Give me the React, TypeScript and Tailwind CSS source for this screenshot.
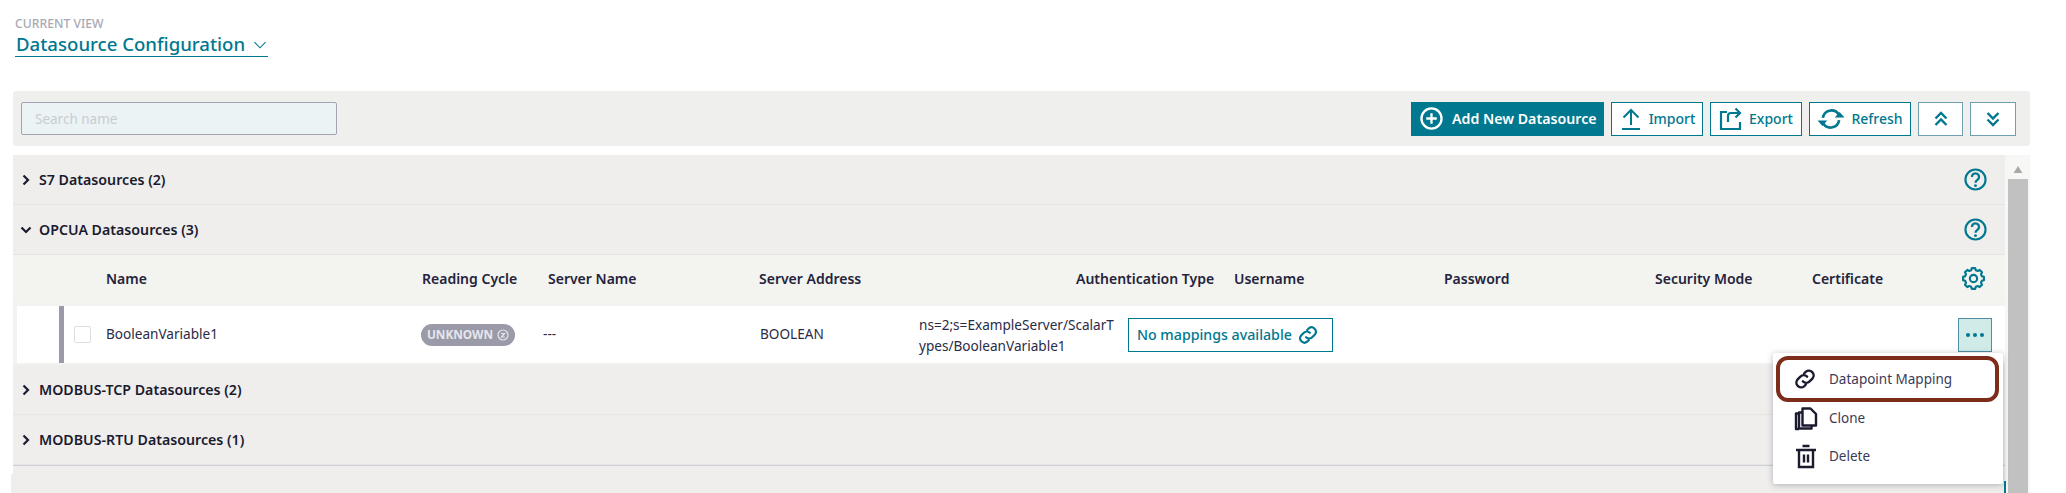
import React from 'react';

const font = { fontFamily: '"Noto Sans", sans-serif' };

const HEADER_COLUMNS = [
  { label: 'Name', width: 'w-[316px]' },
  { label: 'Reading Cycle', width: 'w-[126px]' },
  { label: 'Server Name', width: 'w-[211px]' },
  { label: 'Server Address', width: 'w-[317px]' },
  { label: 'Authentication Type', width: 'w-[158px]' },
  { label: 'Username', width: 'w-[210px]' },
  { label: 'Password', width: 'w-[211px]' },
  { label: 'Security Mode', width: 'w-[157px]' },
  { label: 'Certificate', width: 'w-[100px]' },
];

function gearPath() {
  const teeth = 8;
  const pts: string[] = [];
  for (let i = 0; i < teeth; i++) {
    const a = (i * 2 * Math.PI) / teeth;
    const step = 0.2;
    [
      [9, a - step * 1.35],
      [11, a - step * 0.8],
      [11, a + step * 0.8],
      [9, a + step * 1.35],
    ].forEach(([r, t]) => {
      pts.push(`${(12 + r * Math.sin(t)).toFixed(2)} ${(12 - r * Math.cos(t)).toFixed(2)}`);
    });
  }
  return `M${pts.join('L')}Z`;
}

function LinkIcon({ className }: { className: string }) {
  return (
    <svg viewBox="0 0 24 24" fill="none" stroke="currentColor" strokeWidth="2.6" strokeLinecap="round" className={className}>
      <path d="M11 6l2-2a5.200 5.200 0 0 1 7.300 7.300l-3.300 3.300a5.200 5.200 0 0 1-7.300 0" />
      <path d="M13 18l-2 2a5.200 5.200 0 0 1-7.300-7.300l3.300-3.300a5.200 5.200 0 0 1 7.300 0" />
    </svg>
  );
}

function HelpIcon() {
  return (
    <svg viewBox="0 0 24 24" fill="none" stroke="#00788f" className="h-[23px] w-[23px]">
      <circle cx="12" cy="12" r="10.5" strokeWidth="2.2" />
      <path d="M8.300 9.300a3.700 3.700 0 1 1 5.800 3c-1.300.9-2.100 1.400-2.100 3" strokeWidth="2.4" />
      <circle cx="12" cy="18.400" r="1.500" fill="#00788f" stroke="none" />
    </svg>
  );
}

function GearIcon() {
  return (
    <svg viewBox="0 0 24 24" fill="none" stroke="#00788f" strokeWidth="2.2" strokeLinejoin="round" className="h-[23px] w-[23px]">
      <path d={gearPath()} />
      <circle cx="12" cy="12" r="3.800" />
    </svg>
  );
}

function Chevron({ open }: { open?: boolean }) {
  return (
    <svg viewBox="0 0 12 12" fill="none" stroke="#1b1b30" strokeWidth="2.2" className="h-[12px] w-[12px]">
      <path d={open ? 'M1.500 3.500L6 8l4.500-4.500' : 'M3.500 1.500L8 6l-4.500 4.500'} />
    </svg>
  );
}

function ToolButton({ width, label, icon, muted }: { width: string; label?: string; icon: React.ReactNode; muted?: boolean }) {
  return (
    <button
      className={`${width} ${muted ? 'border-[#6f9fb0]' : 'border-[#00788f]'} flex h-[34px] items-center justify-center gap-[6px] border bg-white text-[14px] font-medium text-[#00788f]`}
    >
      {icon}
      {label}
    </button>
  );
}

function Section({ title, open, help }: { title: string; open?: boolean; help?: boolean }) {
  return (
    <div className="flex h-[50px] items-center border-b border-[#e6e5e2] pr-[18px] pl-[7px]">
      <Chevron open={open} />
      <span className="ml-[7px] flex-1 text-[14.2px] font-semibold text-[#1b1b30]">{title}</span>
      {help && <HelpIcon />}
    </div>
  );
}

export default function App() {
  return (
    <div style={font} className="relative h-[493px] w-[2066px] overflow-hidden bg-white">
      {/* View switcher */}
      <div className="flex h-[91px] flex-col items-start pt-[16px] pl-[15px]">
        <span className="text-[12.2px] leading-[15px] font-medium text-[#a9a9b6]">CURRENT VIEW</span>
        <div className="flex h-[26px] w-[253px] items-center border-b border-[#00788f] pl-[1px] text-[#00788f]">
          <span className="text-[18.6px] font-medium">Datasource Configuration</span>
          <svg viewBox="0 0 16 10" fill="none" stroke="#00788f" strokeWidth="1.4" className="mt-[3px] ml-[8px] h-[8px] w-[14px]">
            <path d="M1 1.500l7 7 7-7" />
          </svg>
        </div>
      </div>

      {/* Toolbar */}
      <div className="ml-[13px] flex h-[55px] w-[2017px] items-center rounded-[3px] bg-[#efefed] pr-[14px] pl-[8px]">
        <input
          placeholder="Search name"
          className="h-[33px] w-[316px] rounded-[2px] border border-[#a3a3b2] bg-[#ecf3f5] pl-[13px] text-[13.5px] placeholder:text-[#c6ced2]"
        />
        <div className="ml-auto flex items-center gap-[7px]">
          <button className="flex h-[34px] w-[193px] items-center gap-[9px] bg-[#00788f] pl-[9px] text-[14.2px] font-semibold text-white">
            <svg viewBox="0 0 24 24" fill="none" stroke="white" strokeWidth="2.4" className="h-[23px] w-[23px]">
              <circle cx="12" cy="12" r="10.5" />
              <path d="M12 6.500v11M6.500 12h11" />
            </svg>
            Add New Datasource
          </button>
          <ToolButton
            width="w-[92px]"
            label="Import"
            icon={
              <svg viewBox="0 0 24 24" fill="none" stroke="#00788f" strokeWidth="2" className="h-[24px] w-[24px]">
                <path d="M12 18V3M4.500 10.500L12 3l7.500 7.500M3 22h18" />
              </svg>
            }
          />
          <ToolButton
            width="w-[92px]"
            label="Export"
            icon={
              <svg viewBox="0 0 24 24" fill="none" stroke="#00788f" strokeWidth="2.2" className="h-[24px] w-[24px]">
                <path d="M8 5H2v17h19v-7M9 15V9a3 3 0 0 1 3-3h8M16.500 1.500L21 6l-4.500 4.500" />
              </svg>
            }
          />
          <ToolButton
            width="w-[102px]"
            label="Refresh"
            icon={
              <svg viewBox="0 0 26 24" fill="none" stroke="#00788f" strokeWidth="2.5" className="h-[26px] w-[28px]">
                <path d="M5.500 11a8 8 0 0 1 14.500-3.500M20.500 13a8 8 0 0 1-14.500 3.500" />
                <path d="M16.500 10.500h9l-4.500-5zM0.500 13.500h9l-4.500 5z" fill="#00788f" stroke="none" />
              </svg>
            }
          />
          <ToolButton
            width="w-[45px]"
            muted
            icon={
              <svg viewBox="0 0 16 16" fill="none" stroke="#00788f" strokeWidth="2.4" className="h-[16px] w-[16px]">
                <path d="M2.500 7.500L8 2l5.500 5.500M2.500 14L8 8.500l5.500 5.500" />
              </svg>
            }
          />
          <ToolButton
            width="w-[46px]"
            muted
            icon={
              <svg viewBox="0 0 16 16" fill="none" stroke="#00788f" strokeWidth="2.4" className="h-[16px] w-[16px]">
                <path d="M2.500 2L8 7.500 13.500 2M2.500 8.500L8 14l5.500-5.500" />
              </svg>
            }
          />
        </div>
      </div>

      {/* Datasource panel */}
      <div className="mt-[9px] ml-[13px] flex h-[338px] w-[2017px] bg-[#f7f7f6]">
        <div className="flex w-[1992px] flex-col bg-[#efeeec]">
          <Section title="S7 Datasources (2)" help />
          <Section title="OPCUA Datasources (3)" open help />

          <div className="flex h-[47px] items-center bg-[#f3f3ef] pl-[93px] text-[14px] font-semibold text-[#23233c]">
            {HEADER_COLUMNS.map((col) => (
              <span key={col.label} className={col.width}>
                {col.label}
              </span>
            ))}
            <span className="ml-[50px]">
              <GearIcon />
            </span>
          </div>

          <div className="flex h-[63px] items-stretch bg-[#f2f2f0] pt-[4px] pb-[2px] pl-[4px]">
            <div className="flex w-[1988px] items-center bg-white pl-[42px] text-[13.6px] text-[#2b2b45]">
              <span className="h-full w-[5px] bg-[#9a9aa8]" />
              <span className="ml-[10px] h-[17px] w-[17px] rounded-[2px] border border-[#dfdfe3] bg-white" />
              <span className="ml-[15px] w-[315px]">BooleanVariable1</span>
              <span className="flex h-[22px] w-[94px] items-center justify-center gap-[4px] rounded-full bg-[#9a9aa8] text-[11.8px] font-bold text-[#e6e6ec]">
                UNKNOWN
                <svg viewBox="0 0 12 12" fill="none" stroke="#e6e6ec" strokeWidth="1.2" className="h-[12px] w-[12px]">
                  <circle cx="6" cy="6" r="5" />
                  <path d="M4 4.500h3.500L4.500 8H8" />
                </svg>
              </span>
              <span className="ml-[28px] w-[217px]">---</span>
              <span className="w-[159px]">BOOLEAN</span>
              <span className="w-[209px] pr-[12px] text-[13.6px] leading-[21px] break-all">ns=2;s=ExampleServer/ScalarTypes/BooleanVariable1</span>
              <button className="flex h-[34px] w-[205px] items-center gap-[6px] border border-[#00788f] pl-[8px] text-[14.2px] font-medium text-[#00788f]">
                No mappings available
                <LinkIcon className="h-[20px] w-[20px]" />
              </button>
              <button className="ml-[625px] flex h-[34px] w-[34px] items-center justify-center gap-[3px] border border-[#4f8fa3] bg-[#d1ece8]">
                <span className="h-[4px] w-[4px] rounded-full bg-[#00788f]" />
                <span className="h-[4px] w-[4px] rounded-full bg-[#00788f]" />
                <span className="h-[4px] w-[4px] rounded-full bg-[#00788f]" />
              </button>
            </div>
          </div>

          <Section title="MODBUS-TCP Datasources (2)" />
          <div className="border-b border-[#cfcfd8]">
            <Section title="MODBUS-RTU Datasources (1)" />
          </div>
          <div className="mt-[8px] -ml-[2px] flex-1 bg-[#efeeec]" />
        </div>

        {/* Scrollbar */}
        <div className="flex w-[25px] flex-col items-center">
          <svg viewBox="0 0 10 8" className="mt-[11px] h-[7px] w-[10px]" fill="#a9a9a9">
            <path d="M5 0l5 8H0z" />
          </svg>
          <div className="mt-[6px] w-[20px] flex-1 bg-[#c1c1c1]" />
        </div>
      </div>

      {/* Row action menu */}
      <div className="absolute top-[353px] left-[1773px] flex h-[131px] w-[230px] flex-col rounded-[2px] bg-white pt-[3px] pl-[3px] text-[13.5px] text-[#3a3a55] shadow-[0_1px_6px_rgba(30,30,60,0.3)]">
        <div className="flex h-[46px] w-[223px] items-center rounded-[12px] border-[4px] border-[#7d2c1a] pl-[14px]">
          <LinkIcon className="h-[22px] w-[22px] text-[#1b1b30]" />
          <span className="ml-[13px]">Datapoint Mapping</span>
        </div>
        <div className="flex h-[33px] items-center pl-[18px]">
          <svg viewBox="0 0 24 24" fill="none" stroke="#1b1b30" strokeWidth="2.4" strokeLinejoin="round" className="h-[25px] w-[24px]">
            <path d="M8.500 2h8l5.500 5.500V19H8.500z" />
            <path d="M8.500 6H5v16h12.500v-3" />
            <path d="M5 7H2v15.500h3" />
          </svg>
          <span className="ml-[11px]">Clone</span>
        </div>
        <div className="flex h-[43px] items-center pl-[18px]">
          <svg viewBox="0 0 24 24" fill="none" stroke="#1b1b30" strokeWidth="2.4" className="h-[25px] w-[24px]">
            <path d="M2 5.500h20M8.500 1.500h7M5 5.500v17h14v-17M10 10v8M14 10v8" />
          </svg>
          <span className="ml-[11px]">Delete</span>
        </div>
      </div>
      <span className="absolute top-[481px] left-[2004px] h-[12px] w-[2px] bg-[#00788f]" />
    </div>
  );
}
